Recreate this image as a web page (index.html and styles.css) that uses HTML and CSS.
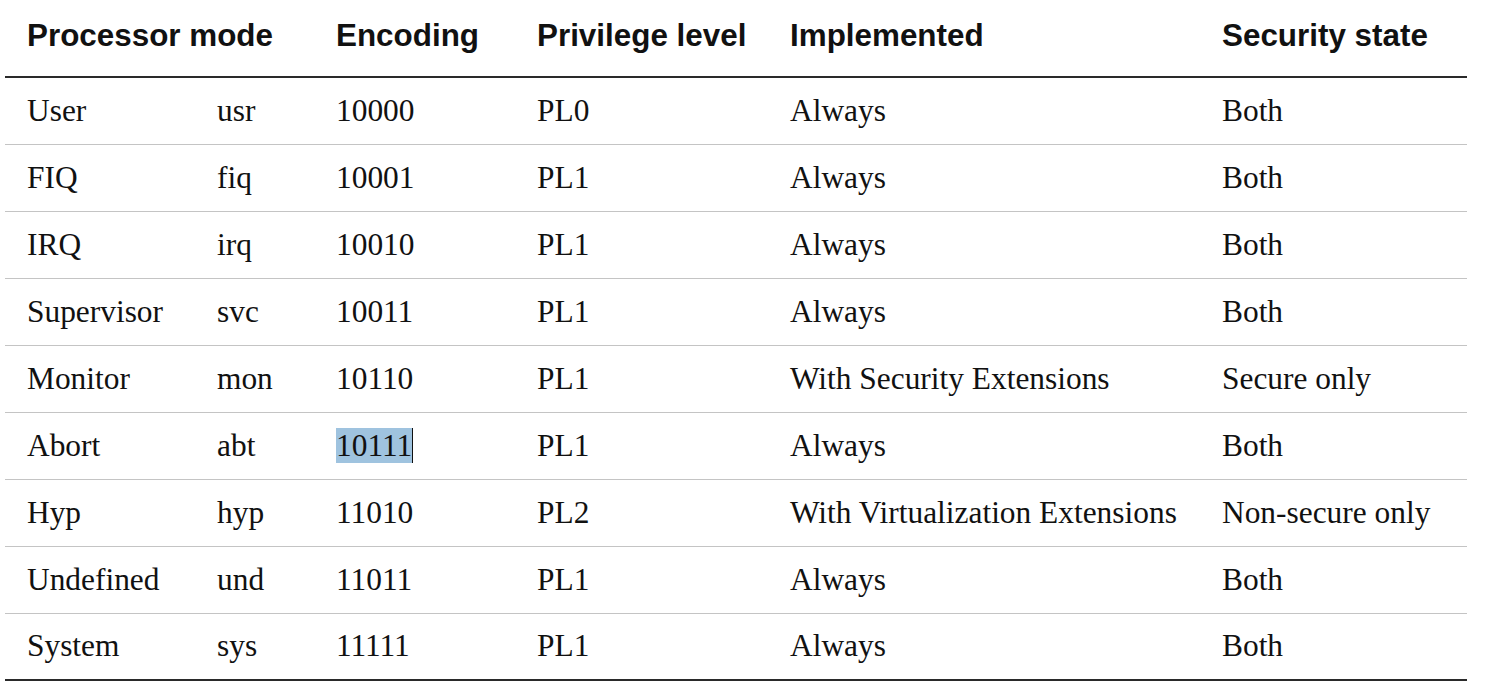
FILE: index.html
```html
<!DOCTYPE html>
<html>
<head>
<meta charset="utf-8">
<link rel="stylesheet" href="styles.css">
</head>
<body>
<table class="modes">
  <colgroup>
    <col class="c1"><col class="c2"><col class="c3"><col class="c4"><col class="c5"><col class="c6">
  </colgroup>
  <thead>
    <tr>
      <th colspan="2">Processor mode</th>
      <th>Encoding</th>
      <th>Privilege level</th>
      <th>Implemented</th>
      <th>Security state</th>
    </tr>
  </thead>
  <tbody>
    <tr><td>User</td><td>usr</td><td>10000</td><td>PL0</td><td>Always</td><td>Both</td></tr>
    <tr><td>FIQ</td><td>fiq</td><td>10001</td><td>PL1</td><td>Always</td><td>Both</td></tr>
    <tr><td>IRQ</td><td>irq</td><td>10010</td><td>PL1</td><td>Always</td><td>Both</td></tr>
    <tr><td>Supervisor</td><td>svc</td><td>10011</td><td>PL1</td><td>Always</td><td>Both</td></tr>
    <tr><td>Monitor</td><td>mon</td><td>10110</td><td>PL1</td><td>With Security Extensions</td><td>Secure only</td></tr>
    <tr><td>Abort</td><td>abt</td><td><span class="sel">10111</span></td><td>PL1</td><td>Always</td><td>Both</td></tr>
    <tr><td>Hyp</td><td>hyp</td><td>11010</td><td>PL2</td><td>With Virtualization Extensions</td><td>Non-secure only</td></tr>
    <tr><td>Undefined</td><td>und</td><td>11011</td><td>PL1</td><td>Always</td><td>Both</td></tr>
    <tr><td>System</td><td>sys</td><td>11111</td><td>PL1</td><td>Always</td><td>Both</td></tr>
  </tbody>
</table>
</body>
</html>
```
FILE: styles.css
```css
html, body {
  margin: 0;
  padding: 0;
  background: #ffffff;
}
body {
  padding-left: 5px;
}
.modes {
  width: 1462px;
  border-collapse: collapse;
  table-layout: fixed;
  color: #111111;
}
.c1 { width: 190px; }
.c2 { width: 119px; }
.c3 { width: 201px; }
.c4 { width: 253px; }
.c5 { width: 432px; }
.c6 { width: 267px; }
.modes th {
  font-family: "Liberation Sans", Arial, sans-serif;
  font-weight: bold;
  font-size: 31.4px;
  text-align: left;
  height: 77px;
  padding: 0 0 0 22px;
  vertical-align: top;
  line-height: 72px;
  border-bottom: 2px solid #2a2a2a;
  box-sizing: border-box;
  white-space: nowrap;
}
.modes td {
  font-family: "Liberation Serif", "Times New Roman", serif;
  font-size: 31.4px;
  height: 67px;
  padding: 0 0 0 22px;
  border-bottom: 1px solid #c4c4c4;
  box-sizing: border-box;
  white-space: nowrap;
  vertical-align: middle;
}
.modes tbody tr:last-child td {
  border-bottom: 2px solid #2a2a2a;
}
.sel {
  background: #9fc3df;
  border-right: 1px solid #111;
}
```
